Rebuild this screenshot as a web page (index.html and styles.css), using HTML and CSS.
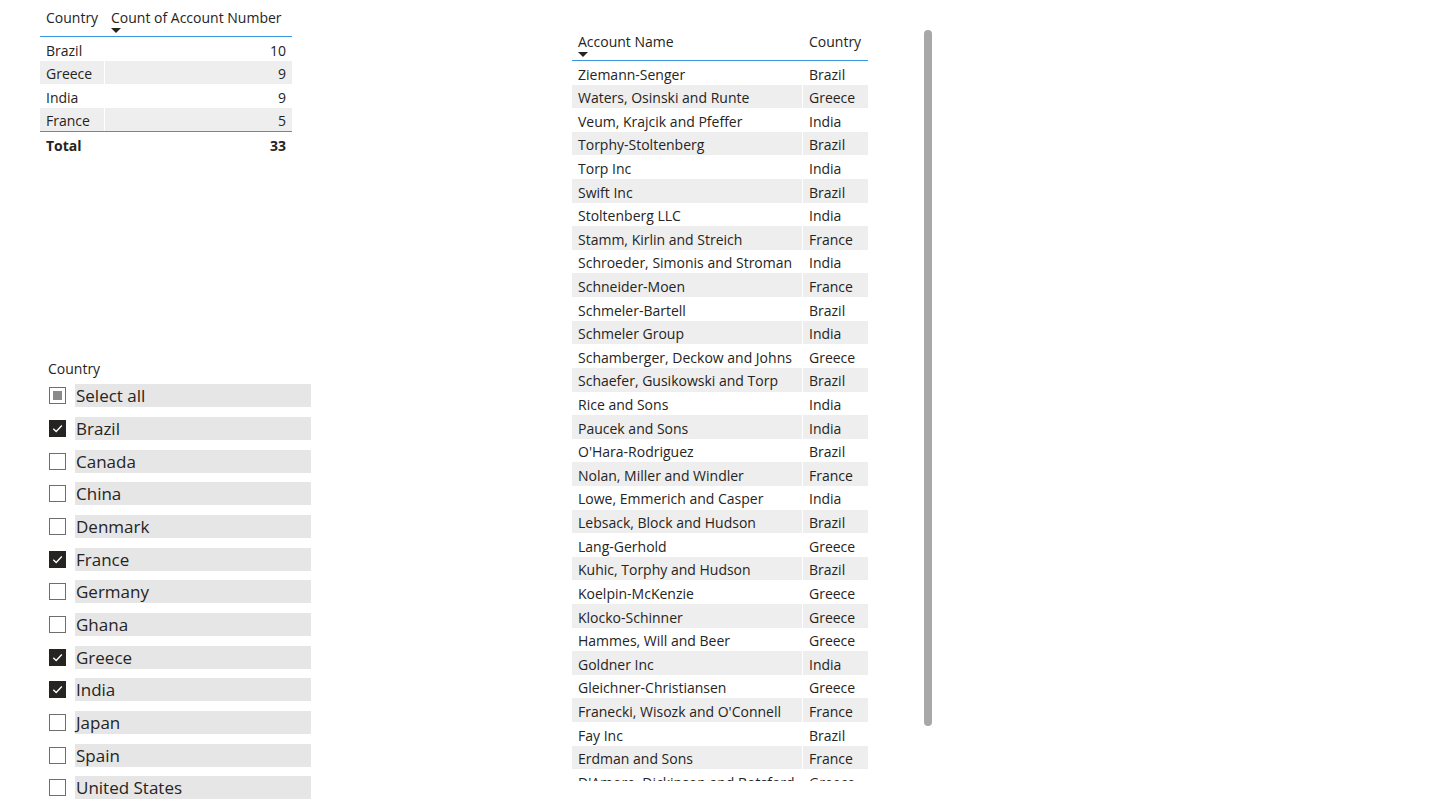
FILE: index.html
```html
<!DOCTYPE html>
<html>
<head>
<meta charset="utf-8">
<link rel="stylesheet" href="styles.css">
</head>
<body>
<div class="page">
  <div class="left">
    <div class="mtable">
      <div class="mhead">
        <div class="hc c1"><span>Country</span></div>
        <div class="hc c2"><span>Count of Account Number</span><i class="sort"></i></div>
      </div>
      <div class="mrow"><div class="c1">Brazil</div><div class="c2 num">10</div></div>
      <div class="mrow alt"><div class="c1">Greece</div><div class="c2 num">9</div></div>
      <div class="mrow"><div class="c1">India</div><div class="c2 num">9</div></div>
      <div class="mrow alt"><div class="c1">France</div><div class="c2 num">5</div></div>
      <div class="mrow total"><div class="c1">Total</div><div class="c2 num">33</div></div>
    </div>

    <div class="slicer">
      <div class="slicer-title">Country</div>
      <div class="items">
        <div class="item"><span class="box partial"></span><span class="lbl">Select all</span></div>
        <div class="item"><span class="box checked"><svg viewBox="0 0 16 16"><path d="M3.5 8.2 L6.6 11.2 L12.6 4.8" fill="none" stroke="#fff" stroke-width="1.4"/></svg></span><span class="lbl">Brazil</span></div>
        <div class="item"><span class="box"></span><span class="lbl">Canada</span></div>
        <div class="item"><span class="box"></span><span class="lbl">China</span></div>
        <div class="item"><span class="box"></span><span class="lbl">Denmark</span></div>
        <div class="item"><span class="box checked"><svg viewBox="0 0 16 16"><path d="M3.5 8.2 L6.6 11.2 L12.6 4.8" fill="none" stroke="#fff" stroke-width="1.4"/></svg></span><span class="lbl">France</span></div>
        <div class="item"><span class="box"></span><span class="lbl">Germany</span></div>
        <div class="item"><span class="box"></span><span class="lbl">Ghana</span></div>
        <div class="item"><span class="box checked"><svg viewBox="0 0 16 16"><path d="M3.5 8.2 L6.6 11.2 L12.6 4.8" fill="none" stroke="#fff" stroke-width="1.4"/></svg></span><span class="lbl">Greece</span></div>
        <div class="item"><span class="box checked"><svg viewBox="0 0 16 16"><path d="M3.5 8.2 L6.6 11.2 L12.6 4.8" fill="none" stroke="#fff" stroke-width="1.4"/></svg></span><span class="lbl">India</span></div>
        <div class="item"><span class="box"></span><span class="lbl">Japan</span></div>
        <div class="item"><span class="box"></span><span class="lbl">Spain</span></div>
        <div class="item"><span class="box"></span><span class="lbl">United States</span></div>
      </div>
    </div>
  </div>

  <div class="right">
    <div class="ttable">
      <div class="thead">
        <div class="hc d1"><span>Account Name</span><i class="sort"></i></div>
        <div class="hc d2"><span>Country</span></div>
      </div>
      <div class="tbody">
        <div class="trow"><div class="d1">Ziemann-Senger</div><div class="d2">Brazil</div></div>
        <div class="trow alt"><div class="d1">Waters, Osinski and Runte</div><div class="d2">Greece</div></div>
        <div class="trow"><div class="d1">Veum, Krajcik and Pfeffer</div><div class="d2">India</div></div>
        <div class="trow alt"><div class="d1">Torphy-Stoltenberg</div><div class="d2">Brazil</div></div>
        <div class="trow"><div class="d1">Torp Inc</div><div class="d2">India</div></div>
        <div class="trow alt"><div class="d1">Swift Inc</div><div class="d2">Brazil</div></div>
        <div class="trow"><div class="d1">Stoltenberg LLC</div><div class="d2">India</div></div>
        <div class="trow alt"><div class="d1">Stamm, Kirlin and Streich</div><div class="d2">France</div></div>
        <div class="trow"><div class="d1">Schroeder, Simonis and Stroman</div><div class="d2">India</div></div>
        <div class="trow alt"><div class="d1">Schneider-Moen</div><div class="d2">France</div></div>
        <div class="trow"><div class="d1">Schmeler-Bartell</div><div class="d2">Brazil</div></div>
        <div class="trow alt"><div class="d1">Schmeler Group</div><div class="d2">India</div></div>
        <div class="trow"><div class="d1">Schamberger, Deckow and Johns</div><div class="d2">Greece</div></div>
        <div class="trow alt"><div class="d1">Schaefer, Gusikowski and Torp</div><div class="d2">Brazil</div></div>
        <div class="trow"><div class="d1">Rice and Sons</div><div class="d2">India</div></div>
        <div class="trow alt"><div class="d1">Paucek and Sons</div><div class="d2">India</div></div>
        <div class="trow"><div class="d1">O'Hara-Rodriguez</div><div class="d2">Brazil</div></div>
        <div class="trow alt"><div class="d1">Nolan, Miller and Windler</div><div class="d2">France</div></div>
        <div class="trow"><div class="d1">Lowe, Emmerich and Casper</div><div class="d2">India</div></div>
        <div class="trow alt"><div class="d1">Lebsack, Block and Hudson</div><div class="d2">Brazil</div></div>
        <div class="trow"><div class="d1">Lang-Gerhold</div><div class="d2">Greece</div></div>
        <div class="trow alt"><div class="d1">Kuhic, Torphy and Hudson</div><div class="d2">Brazil</div></div>
        <div class="trow"><div class="d1">Koelpin-McKenzie</div><div class="d2">Greece</div></div>
        <div class="trow alt"><div class="d1">Klocko-Schinner</div><div class="d2">Greece</div></div>
        <div class="trow"><div class="d1">Hammes, Will and Beer</div><div class="d2">Greece</div></div>
        <div class="trow alt"><div class="d1">Goldner Inc</div><div class="d2">India</div></div>
        <div class="trow"><div class="d1">Gleichner-Christiansen</div><div class="d2">Greece</div></div>
        <div class="trow alt"><div class="d1">Franecki, Wisozk and O'Connell</div><div class="d2">France</div></div>
        <div class="trow"><div class="d1">Fay Inc</div><div class="d2">Brazil</div></div>
        <div class="trow alt"><div class="d1">Erdman and Sons</div><div class="d2">France</div></div>
        <div class="trow"><div class="d1">D'Amore, Dickinson and Botsford</div><div class="d2">Greece</div></div>
      </div>
    </div>
    <div class="scrollbar"></div>
  </div>
</div>
</body>
</html>
```

FILE: styles.css
```css
html, body {
  margin: 0;
  padding: 0;
  background: #ffffff;
}
body {
  font-family: "Open Sans", "Noto Sans", sans-serif;
  color: #252423;
  width: 1438px;
  height: 808px;
  overflow: hidden;
}
.page {
  display: flex;
  align-items: flex-start;
}
.left {
  width: 272px;
  margin-left: 40px;
  display: flex;
  flex-direction: column;
}

/* matrix table */
.mtable {
  width: 252px;
  font-size: 14px;
}
.mhead {
  display: flex;
  border-bottom: 1px solid #3a96dd;
  height: 37px;
  box-sizing: border-box;
}
.hc {
  display: flex;
  flex-direction: column;
  padding-top: 8px;
  box-sizing: border-box;
  line-height: 19px;
  white-space: nowrap;
  color: #252423;
}
.sort {
  display: block;
  width: 0;
  height: 0;
  border-left: 5px solid transparent;
  border-right: 5px solid transparent;
  border-top: 5px solid #252423;
  margin-top: 1px;
}
.c1 {
  width: 65px;
  padding-left: 6px;
  box-sizing: border-box;
}
.c2 {
  width: 187px;
  padding-left: 6px;
  padding-right: 6px;
  box-sizing: border-box;
}
.mrow {
  display: flex;
  height: 23.6px;
  white-space: nowrap;
}
.mrow .c1, .mrow .c2 {
  height: 100%;
  line-height: 20px;
  padding-top: 3.5px;
}
.mrow.alt .c1, .mrow.alt .c2, .trow.alt .d1, .trow.alt .d2 {
  background: #eeeeee;
}
.mrow.alt .c1, .trow.alt .d1 {
  border-right: 1px solid #ffffff;
}
.mrow .c1, .trow .d1 {
  border-right: 1px solid transparent;
}
.num {
  text-align: right;
}
.mrow.total {
  border-top: 1px solid #3a96dd;
  font-weight: 700;
}

/* slicer */
.slicer {
  margin-top: 203px;
  margin-left: 8px;
  width: 263px;
}
.slicer-title {
  font-size: 14px;
  line-height: 20px;
  height: 20px;
}
.items {
  display: flex;
  flex-direction: column;
  gap: 9.67px;
  margin-top: 5.5px;
}
.item {
  display: flex;
  align-items: center;
  height: 23px;
}
.box {
  width: 17px;
  height: 17px;
  box-sizing: border-box;
  border: 1px solid #6e6e6e;
  background: #ffffff;
  margin-left: 1px;
  margin-right: 9px;
  flex: none;
  display: flex;
  align-items: center;
  justify-content: center;
}
.box.partial::after {
  content: "";
  width: 9px;
  height: 9px;
  background: #8a8a8a;
}
.box.checked {
  background: #252423;
  border-color: #252423;
}
.box svg {
  width: 15px;
  height: 15px;
}
.lbl {
  flex: 1;
  height: 23px;
  line-height: 23px;
  background: #e6e6e6;
  font-size: 17px;
  padding-left: 1px;
  white-space: nowrap;
}

/* right table */
.right {
  margin-left: 260px;
  margin-top: 30px;
  display: flex;
  align-items: flex-start;
}
.ttable {
  width: 296px;
  height: 751px;
  overflow: hidden;
  font-size: 14px;
}
.thead {
  display: flex;
  height: 31px;
  border-bottom: 1px solid #3a96dd;
  box-sizing: border-box;
}
.thead .hc {
  padding-top: 2px;
}
.d1 {
  width: 231px;
  padding-left: 6px;
  box-sizing: border-box;
}
.d2 {
  width: 65px;
  padding-left: 6px;
  box-sizing: border-box;
}
.trow {
  display: flex;
  height: 23.62px;
  white-space: nowrap;
}
.trow .d1, .trow .d2 {
  height: 100%;
  overflow: hidden;
  line-height: 20px;
  padding-top: 3.5px;
}
.scrollbar {
  width: 8px;
  height: 696px;
  background: #a8a8a8;
  border-radius: 4px;
  margin-left: 56px;
  flex: none;
}
```
